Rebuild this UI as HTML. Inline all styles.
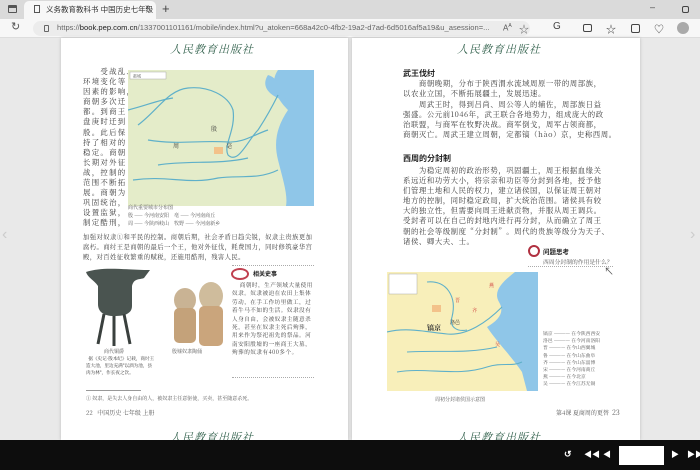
<!DOCTYPE html>
<html><head><meta charset="utf-8"><style>
*{margin:0;padding:0;box-sizing:border-box}
body{width:700px;height:470px;overflow:hidden;background:#e9e9e9;font-family:"Noto Serif CJK SC","Noto Sans CJK SC",serif;position:relative;color:#333}
.a{position:absolute}
.s{font-family:"Liberation Sans","Noto Sans CJK SC",sans-serif}
.t{color:#3a3a3a}
.n{white-space:nowrap}
.logo{font-family:"Noto Serif CJK SC",serif;font-style:italic;color:#2f5f4a;font-size:11px;letter-spacing:1px}
.h{font-size:8px;font-weight:bold;color:#222;font-family:"Noto Sans CJK SC",sans-serif}
.lg{font-size:5px;color:#555;line-height:11px;white-space:nowrap}
</style></head><body>
<div class="a" style="left:0;top:0;width:700px;height:19px;background:#dadada"></div>
<div class="a" style="left:8px;top:5px;width:9px;height:8px;border:1.3px solid #555;border-radius:1px;border-top-width:3px"></div>
<div class="a" style="left:24px;top:1px;width:132px;height:18px;background:#f7f7f7;border-radius:5px 5px 0 0"></div>
<div class="a" style="left:34px;top:5px;width:6px;height:8px;border:1px solid #555"></div>
<div class="a s" style="left:46px;top:4px;font-size:7.5px;color:#333">义务教育教科书 中国历史七年级</div>
<div class="a s" style="left:145px;top:3px;font-size:8px;color:#333">×</div>
<div class="a s" style="left:162px;top:1px;font-size:13px;color:#444">+</div>
<div class="a s" style="left:650px;top:2px;font-size:9px;color:#444">–</div>
<div class="a" style="left:682px;top:6px;width:7px;height:7px;border:1.2px solid #444;border-radius:2px"></div>
<div class="a" style="left:0;top:19px;width:700px;height:19px;background:#f7f7f7;border-bottom:1px solid #ddd"></div>
<div class="a s" style="left:11px;top:20px;font-size:11px;color:#555">↻</div>
<div class="a" style="left:33px;top:21px;width:497px;height:15px;background:#ececec;border-radius:8px"></div>
<div class="a" style="left:44px;top:25px;width:5px;height:7px;border:1px solid #666;border-radius:1px"></div>
<div class="a s" style="left:57px;top:23px;font-size:7.6px;color:#666;white-space:nowrap">https://<b style="color:#222;font-weight:normal">book.pep.com.cn</b>/1337001101161/mobile/index.html?u_atoken=668a42c0-4fb2-19a2-d7ad-6d5016af5a19&amp;u_asession=...</div>
<div class="a s" style="left:503px;top:23px;font-size:8px;color:#555">A<sup style="font-size:5px">A</sup></div>
<div class="a s" style="left:519px;top:21px;font-size:10px;color:#666">☆</div>
<div class="a s" style="left:553px;top:21px;font-size:10px;color:#444">G</div>
<div class="a" style="left:583px;top:24px;width:9px;height:8px;border:1.2px solid #444;border-radius:2px"></div>
<div class="a s" style="left:606px;top:21px;font-size:10px;color:#444">☆</div>
<div class="a" style="left:631px;top:24px;width:9px;height:9px;border:1.2px solid #444;border-radius:2px"></div>
<div class="a s" style="left:654px;top:21px;font-size:10px;color:#444">♡</div>
<div class="a" style="left:677px;top:22px;width:12px;height:12px;background:#aaa;border-radius:50%"></div>
<div class="a s" style="left:2px;top:226px;font-size:16px;color:#ccc">‹</div>
<div class="a s" style="left:690px;top:226px;font-size:16px;color:#ccc">›</div>
<div class="a" style="left:61px;top:38px;width:287px;height:402px;background:#fff;box-shadow:0 0 3px #bbb"></div>
<div class="a" style="left:352px;top:38px;width:288px;height:402px;background:#fff;box-shadow:0 0 3px #bbb"></div>
<div class="a logo" style="left:170px;top:41px">人民教育出版社</div>
<div class="a logo" style="left:457px;top:41px">人民教育出版社</div>
<div class="a logo" style="left:170px;top:429px">人民教育出版社</div>
<div class="a logo" style="left:457px;top:429px">人民教育出版社</div>
<div class="a t n" style="left:83px;top:67px;font-size:7.4px;line-height:10.1px;letter-spacing:1.3px">　　受战乱、<br>环境变化等<br>因素的影响，<br>商朝多次迁<br>都。到商王<br>盘庚时迁到<br>殷。此后保<br>持了相对的<br>稳定。商朝<br>长期对外征<br>战，控制的<br>范围不断拓<br>展。商朝为<br>巩固统治，<br>设置监狱，<br>制定酷刑，</div>
<div class="a t n" style="left:83px;top:232px;font-size:6.3px;line-height:10px;letter-spacing:0.45px">加强对奴隶①和平民的控制。商朝后期，社会矛盾日趋尖锐，奴隶主贵族更加<br>腐朽。商纣王是商朝的最后一个王，他对外征伐，耗费国力，同时修筑豪华宫<br>殿，对百姓征收繁重的赋税，还施用酷刑，残害人民。</div>
<svg class="a" style="left:128px;top:70px" width="186" height="136" viewBox="0 0 186 136">
<rect width="186" height="136" fill="#e4ecc9"/>
<path d="M186 0 L150 0 C140 15 150 30 160 40 C150 55 145 70 150 90 C155 110 160 125 158 136 L186 136Z" fill="#8fc6e8"/>
<path d="M140 5 C130 20 150 30 158 30 C150 15 150 8 140 5Z" fill="#8fc6e8"/>
<g fill="none" stroke="#5fb0c9" stroke-width="1.2">
<path d="M10 55 C30 40 40 20 60 18 C80 16 100 25 105 40 C108 60 95 75 100 85 C110 95 120 70 130 60 C140 45 145 35 150 25"/>
<path d="M20 70 C50 75 70 70 100 72 C115 73 125 65 140 60"/>
<path d="M5 110 C40 105 60 115 90 108 C110 105 130 110 150 100"/>
<path d="M30 95 C60 90 90 95 120 88"/>
<path d="M0 40 C20 35 30 30 45 28"/>
</g>
<rect x="2" y="2" width="36" height="7" fill="#fff" stroke="#999" stroke-width=".4"/>
<text x="5" y="7.5" font-size="4" fill="#555">都城</text>
<rect x="86" y="77" width="9" height="7" fill="#f3c28a"/>
<text x="83" y="61" font-size="6" fill="#333">殷</text>
<text x="98" y="78" font-size="6" fill="#333">亳</text>
<text x="45" y="78" font-size="6" fill="#333">周</text>
</svg>
<div class="a lg" style="left:128px;top:204px;line-height:8px">商代重要城市分布图<br>殷 —— 今河南安阳 &nbsp;&nbsp;&nbsp;亳 —— 今河南商丘<br>周 —— 今陕西岐山 &nbsp;&nbsp;&nbsp;牧野 —— 今河南新乡</div>
<svg class="a" style="left:84px;top:266px" width="150" height="82" viewBox="0 0 150 82">
<path d="M2 6 C20 0 40 4 66 4 L60 12 C55 14 50 12 48 20 L48 40 C48 48 40 50 30 50 C20 50 14 46 14 38 L14 20 C10 14 4 12 2 6Z" fill="#4a5450"/>
<path d="M20 48 L14 78 M30 50 L30 80 M40 48 L46 78" stroke="#3a403e" stroke-width="3"/>
<ellipse cx="101" cy="34" rx="11" ry="12" fill="#c9b394"/>
<rect x="90" y="42" width="22" height="35" rx="5" fill="#c4a27a"/>
<ellipse cx="127" cy="30" rx="12" ry="14" fill="#cfbc9c"/>
<rect x="115" y="40" width="24" height="40" rx="5" fill="#caa57c"/>
</svg>
<div class="a lg" style="left:104px;top:346px">商代铜爵</div>
<div class="a lg" style="left:172px;top:346px">殷墟奴隶陶俑</div>
<div class="a t" style="left:86px;top:356px;width:70px;font-size:4.6px;line-height:7px">&nbsp;&nbsp;据《史记·殷本纪》记载，商纣王造大池，里边充满"以酒为池，县肉为林"，作长夜之饮。</div>
<div class="a" style="left:232px;top:265px;width:82px;border-top:1px dotted #aaa"></div>
<div class="a" style="left:231px;top:268px;width:18px;height:12px;border-radius:50%;border:2px solid #c04050"></div>
<div class="a h" style="left:253px;top:269px;font-size:6px">相关史事</div>
<div class="a t" style="left:232px;top:281px;width:82px;font-size:5.6px;line-height:8.4px;letter-spacing:0.5px">&nbsp;&nbsp;&nbsp;&nbsp;商朝时，生产领域大量使用奴隶。奴隶被迫在农田上集体劳动，在手工作坊里做工，过着牛马不如的生活。奴隶没有人身自由，会被奴隶主随意杀死，甚至在奴隶主死后殉葬，用来作为祭祀祖先的祭品。河南安阳殷墟的一座商王大墓，殉葬的奴隶有400多个。</div>
<div class="a" style="left:232px;top:377px;width:82px;border-top:1px dotted #aaa"></div>
<div class="a" style="left:86px;top:390px;width:55px;border-top:.5px solid #999"></div>
<div class="a lg" style="left:86px;top:393px">① 奴隶，是失去人身自由的人，被奴隶主任意驱使，买卖，甚至随意杀死。</div>
<div class="a lg" style="left:86px;top:407px;font-size:6px">22 &nbsp;&nbsp;中国历史 七年级 上册</div>
<div class="a h" style="left:403px;top:68px">武王伐纣</div>
<div class="a t n" style="left:403px;top:79px;font-size:7.4px;line-height:10.3px;letter-spacing:0.55px">　　商朝晚期，分布于陕西渭水流域周原一带的周部族，<br>以农业立国，不断拓展疆土，发展迅速。<br>　　周武王时，得到吕尚、周公等人的辅佐，周部族日益<br>强盛。公元前1046年，武王联合各地势力，组成庞大的政<br>治联盟，与商军在牧野决战。商军倒戈，周军占领商都，<br>商朝灭亡。周武王建立周朝，定都镐（hào）京，史称西周。</div>
<div class="a h" style="left:403px;top:153px">西周的分封制</div>
<div class="a t n" style="left:403px;top:166px;font-size:7.4px;line-height:10.1px;letter-spacing:0.55px">　　为稳定周初的政治形势，巩固疆土，周王根据血缘关<br>系远近和功劳大小，将宗亲和功臣等分封到各地，授予他<br>们管理土地和人民的权力，建立诸侯国，以保证周王朝对<br>地方的控制，同时稳定政局，扩大统治范围。诸侯具有较<br>大的独立性，但需要向周王进献贡物，并服从周王调兵。<br>受封者可以在自己的封地内进行再分封，从而确立了周王<br>朝的社会等级制度“分封制”。周代的贵族等级分为天子、<br>诸侯、卿大夫、士。</div>
<div class="a" style="left:528px;top:245px;width:12px;height:12px;border-radius:50%;border:2px solid #b03040"></div>
<div class="a h" style="left:543px;top:246px;font-size:6.5px">问题思考</div>
<div class="a lg" style="left:543px;top:256px;font-size:5.8px">西周分封制的作用是什么？</div>
<div class="a" style="left:528px;top:266px;width:85px;border-top:1px dotted #aaa"></div>
<div class="a s" style="left:604px;top:263px;font-size:10px;color:#555">↖</div>
<svg class="a" style="left:387px;top:272px" width="151" height="119" viewBox="0 0 151 119">
<rect width="151" height="119" fill="#f8efba"/>
<path d="M151 0 L128 0 C118 8 105 18 112 30 C118 40 112 48 100 55 C110 70 125 85 135 100 L140 119 L151 119Z" fill="#8fc6e8"/>
<g fill="none" stroke="#5fb0c9" stroke-width="1.1">
<path d="M0 60 C20 55 40 60 60 62 C80 64 100 50 115 35"/>
<path d="M40 10 C60 8 70 25 65 45 C62 55 70 60 80 58"/>
<path d="M10 100 C40 95 70 105 100 95 C115 90 125 95 135 90"/>
<path d="M20 80 C50 78 80 82 110 75"/>
</g>
<rect x="2" y="2" width="28" height="20" fill="#fff" stroke="#999" stroke-width=".4"/>
<rect x="45" y="33" width="9" height="7" fill="#f3c28a"/>
<text x="40" y="58" font-size="7" font-weight="bold" fill="#333">镐京</text>
<text x="63" y="52" font-size="5" fill="#333">洛邑</text>
<g fill="#c33" font-size="5"><text x="102" y="15">燕</text><text x="85" y="40">齐</text><text x="108" y="74">吴</text><text x="68" y="30">晋</text></g>
</svg>
<div class="a lg" style="left:435px;top:394px">周初分封诸侯国示意图</div>
<div class="a lg" style="left:543px;top:330px;line-height:7.2px;font-size:4.8px">镐京 ———— 在今陕西西安<br>洛邑 ———— 在今河南洛阳<br>晋 ———— 在今山西翼城<br>鲁 ———— 在今山东曲阜<br>齐 ———— 在今山东淄博<br>宋 ———— 在今河南商丘<br>燕 ———— 在今北京<br>吴 ———— 在今江苏无锡</div>
<div class="a lg" style="left:556px;top:407px;font-size:6px">第4课 夏商周的更替 &nbsp;<span style="font-size:7px">23</span></div>
<div class="a" style="left:0;top:440px;width:700px;height:30px;background:#0d0d0d"></div>
<div class="a s" style="left:564px;top:449px;font-size:9px;color:#fff;font-weight:bold">↺</div>
<div class="a s" style="left:584px;top:449px;font-size:8px;color:#fff">◀◀</div>
<div class="a s" style="left:603px;top:449px;font-size:8px;color:#fff">◀</div>
<div class="a" style="left:619px;top:446px;width:45px;height:19px;background:#fff"></div>
<div class="a s" style="left:671px;top:449px;font-size:8px;color:#fff">▶</div>
<div class="a s" style="left:687px;top:449px;font-size:8px;color:#fff">▶▶</div>
</body></html>
